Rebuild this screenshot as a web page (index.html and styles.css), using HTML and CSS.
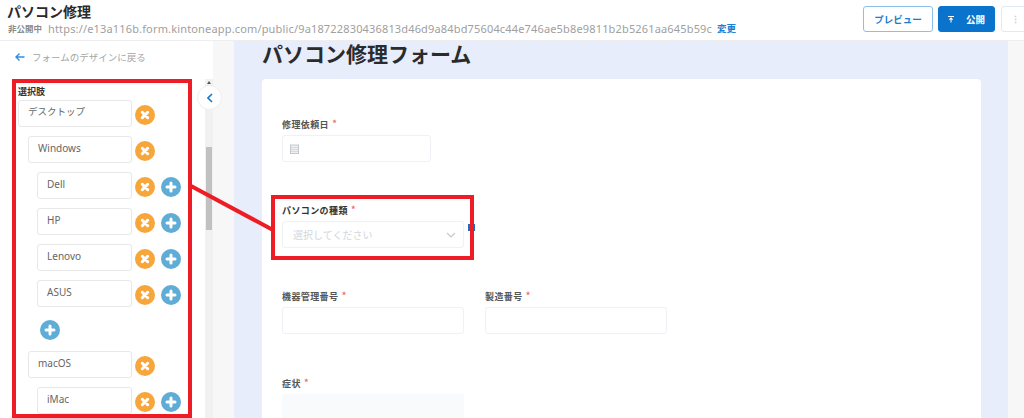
FILE: index.html
```html
<!DOCTYPE html>
<html lang="ja">
<head>
<meta charset="utf-8">
<title>パソコン修理</title>
<link rel="stylesheet" href="styles.css">
</head>
<body>
<div class="app">
  <header class="topbar">
    <div class="topinfo">
      <div class="apptitle">パソコン修理</div>
      <div class="urlrow">
        <span class="status">非公開中</span>
        <span class="url">https://e13a116b.form.kintoneapp.com/public/9a18722830436813d46d9a84bd75604c44e746ae5b8e9811b2b5261aa645b59c</span>
        <span class="change">変更</span>
      </div>
    </div>
    <div class="actions">
      <button class="btn preview">プレビュー</button>
      <button class="btn publish">
        <svg class="pubicon" width="6" height="7" viewBox="0 0 8 9"><path d="M0 0.5h8M4 8.5V3M1.8 4.8L4 2.6l2.2 2.2" fill="none" stroke="#fff" stroke-width="1.4"/></svg>
        公開
      </button>
      <button class="btn more">⋮</button>
    </div>
  </header>
  <div class="main">
    <aside class="side">
      <div class="sidecontent">
        <div class="back">
          <svg width="10" height="10" viewBox="0 0 10 10"><path d="M9.5 5H1M4.5 1.5L1 5l3.500 3.500" fill="none" stroke="#2e8fe0" stroke-width="1.400"/></svg>
          <span>フォームのデザインに戻る</span>
        </div>
        <div class="optlabel">選択肢</div>
        <div class="opt l0"><div class="optinput">デスクトップ</div><span class="round del"><svg viewBox="0 0 20 20"><use href="#x"/></svg></span></div>
        <div class="opt l1"><div class="optinput">Windows</div><span class="round del"><svg viewBox="0 0 20 20"><use href="#x"/></svg></span></div>
        <div class="opt l2"><div class="optinput">Dell</div><span class="round del"><svg viewBox="0 0 20 20"><use href="#x"/></svg></span><span class="round add"><svg viewBox="0 0 20 20"><use href="#p"/></svg></span></div>
        <div class="opt l2"><div class="optinput">HP</div><span class="round del"><svg viewBox="0 0 20 20"><use href="#x"/></svg></span><span class="round add"><svg viewBox="0 0 20 20"><use href="#p"/></svg></span></div>
        <div class="opt l2"><div class="optinput">Lenovo</div><span class="round del"><svg viewBox="0 0 20 20"><use href="#x"/></svg></span><span class="round add"><svg viewBox="0 0 20 20"><use href="#p"/></svg></span></div>
        <div class="opt l2"><div class="optinput">ASUS</div><span class="round del"><svg viewBox="0 0 20 20"><use href="#x"/></svg></span><span class="round add"><svg viewBox="0 0 20 20"><use href="#p"/></svg></span></div>
        <div class="addrow"><span class="round add"><svg viewBox="0 0 20 20"><use href="#p"/></svg></span></div>
        <div class="opt l1"><div class="optinput">macOS</div><span class="round del"><svg viewBox="0 0 20 20"><use href="#x"/></svg></span></div>
        <div class="opt l2"><div class="optinput">iMac</div><span class="round del"><svg viewBox="0 0 20 20"><use href="#x"/></svg></span><span class="round add"><svg viewBox="0 0 20 20"><use href="#p"/></svg></span></div>
      </div>
      <div class="scrollbar"><div class="sbup"></div><div class="sbthumb"></div></div>
    </aside>
    <div class="gutter">
      <span class="collapse"><svg width="6" height="10" viewBox="0 0 6 10"><path d="M5 1L1 5l4 4" fill="none" stroke="#1478d0" stroke-width="1.600"/></svg></span>
    </div>
    <main class="canvas">
      <h1 class="formtitle">パソコン修理フォーム</h1>
      <div class="card">
        <div class="field date">
          <label>修理依頼日<i>*</i></label>
          <div class="input narrow">
            <svg width="9" height="10" viewBox="0 0 9 10"><rect x="0.500" y="1" width="8" height="8.500" fill="#eef0f3" stroke="#c3c8cf"/><path d="M1 3.500h7M1 5.500h7M1 7.500h7" stroke="#ced2d8" stroke-width="0.800"/></svg>
          </div>
        </div>
        <div class="field kind">
          <label>パソコンの種類<i>*</i></label>
          <div class="input select">
            <span>選択してください</span>
            <svg width="10" height="6" viewBox="0 0 10 6"><path d="M1 1l4 4 4-4" fill="none" stroke="#c4cad2" stroke-width="1.200"/></svg>
          </div>
          <span class="handle"></span>
        </div>
        <div class="fieldrow">
          <div class="field"><label>機器管理番号<i>*</i></label><div class="input"></div></div>
          <div class="field"><label>製造番号<i>*</i></label><div class="input"></div></div>
        </div>
        <div class="field symptom">
          <label>症状<i>*</i></label>
          <div class="textarea"></div>
        </div>
      </div>
    </main>
    <div class="rightbar"></div>
  </div>
  <div class="redbox box1"></div>
  <div class="redbox box2"></div>
  <svg class="connector" width="1024" height="418" viewBox="0 0 1024 418"><line x1="191" y1="186" x2="273" y2="230" stroke="#ee1c25" stroke-width="4"/></svg>
</div>
<svg class="defs" width="0" height="0">
  <defs>
    <g id="x"><path d="M7.300 7.300l5.400 5.400M12.700 7.300l-5.400 5.400" stroke="#fff" stroke-width="3" stroke-linecap="round"/></g>
    <g id="p"><path d="M10 6v8M6 10h8" stroke="#fff" stroke-width="3" stroke-linecap="round"/></g>
  </defs>
</svg>
</body>
</html>
```
FILE: styles.css
```css
* { box-sizing: border-box; }
html, body { margin: 0; padding: 0; width: 1024px; height: 418px; overflow: hidden; background: #fff; }
body { font-family: "Noto Sans CJK JP", "Noto Sans", sans-serif; color: #333; }
.app { position: relative; width: 1024px; height: 418px; display: flex; flex-direction: column; overflow: hidden; }
.defs { position: absolute; }

.topbar { height: 41px; flex: none; display: flex; justify-content: space-between; border-bottom: 1px solid #eee; }
.topinfo { padding: 0 0 0 7px; }
.apptitle { font-size: 14px; line-height: 22px; font-weight: 700; color: #2a2a2a; height: 20px; }
.urlrow { display: flex; align-items: center; height: 16px; white-space: nowrap; }
.status { font-size: 8.500px; font-weight: 700; color: #8a8a8a; margin: 0 0 0 1px; width: 40px; }
.url { font-family: "Noto Sans", sans-serif; font-size: 11px; color: #a0a0a0; width: 669px; letter-spacing: 0.160px; }
.change { font-size: 9.500px; font-weight: 700; color: #1a80d0; }
.actions { display: flex; gap: 5px; padding-top: 6px; margin-right: -7px; }
.btn { height: 26px; border-radius: 3px; font-family: inherit; font-size: 9.500px; font-weight: 700; padding: 0; }
.preview { width: 70px; background: #fff; border: 1px solid #8cc0e8; color: #1a7ccc; }
.publish { width: 57px; margin-right: 1px; background: #0a74cc; border: 1px solid #0a74cc; color: #fff; display: flex; align-items: center; justify-content: center; gap: 12px; }
.pubicon { flex: none; }
.more { width: 30px; background: #fff; border: 1px solid #dfeaf6; color: #ccc; font-size: 9px; text-align: left; padding-left: 9px; }

.main { flex: 1; display: flex; min-height: 0; }
.side { width: 213px; flex: none; display: flex; background: #fff; overflow: hidden; }
.sidecontent { width: 205px; flex: none; padding: 0 0 0 18px; overflow: hidden; }
.back { display: flex; align-items: center; gap: 7px; height: 18px; margin: 7px 0 0 -3px; font-size: 9.500px; color: #a5a5a5; }
.optlabel { margin-top: 20px; font-size: 9px; line-height: 12px; font-weight: 700; color: #333; height: 12px; margin-bottom: 1px; }
.opt { display: flex; align-items: center; height: 28px; margin-bottom: 8px; }
.l0 { padding-left: 0; }
.l1 { padding-left: 10px; }
.l2 { padding-left: 19px; }
.optinput { flex: 0 0 auto; height: 27px; border: 1px solid #e8e8e8; border-radius: 3px; background: #fff; font-family: "Noto Sans", "Noto Sans CJK JP", sans-serif; font-size: 10px; line-height: 22px; padding-left: 9px; color: #666; }
.l0 .optinput { width: 114px; font-size: 9.500px; }
.l1 .optinput { width: 104px; }
.l2 .optinput { width: 95px; }
.round { width: 20px; height: 20px; border-radius: 50%; flex: none; display: block; margin-top: 3px; }
.round svg { display: block; width: 20px; height: 20px; }
.del { background: #f7a63c; margin-left: 3px; }
.add { background: #5facd6; margin-left: 6px; }
.addrow { height: 20px; margin: 13px 0 10px 16px; }
.addrow .add { margin: 0 0 0 6px; }

.scrollbar { width: 8px; flex: none; background: #f1f1f1; margin-top: 38px; position: relative; }
.sbup { width: 0; height: 0; margin: 2px auto 0; border: 2px solid transparent; border-bottom: 3px solid #555; border-top: 0; }
.sbthumb { width: 6px; height: 83px; margin: 63px auto 0; background: #c1c1c1; }

.gutter { width: 21px; flex: none; background: #f7f7f7; position: relative; }
.collapse { position: absolute; left: -16px; top: 44px; width: 25px; height: 25px; border-radius: 50%; background: #fff; border: 1px solid #eee; display: flex; align-items: center; justify-content: center; }

.canvas { flex: 1; background: #e8edfc; padding: 0 27px 0 28px; }
.formtitle { margin: 0; height: 38px; font-size: 21px; line-height: 25px; font-weight: 700; color: #2b2b2b; }
.card { background: #fff; border-radius: 4px; height: 400px; padding: 38px 20px 0; }
label { display: block; font-size: 9px; line-height: 13px; font-weight: 700; color: #555; letter-spacing: 0.400px; height: 13px; }
label i { font-style: normal; color: #f0625c; font-size: 11px; font-weight: 400; margin-left: 3px; }
.input { width: 182px; height: 27px; margin-top: 5px; border: 1px solid #eef1f6; border-radius: 3px; background: #fff; }
.narrow { width: 149px; display: flex; align-items: center; padding-left: 7px; }
.field { position: relative; }
.kind { margin-top: 41px; }
.kind label { color: #333; }
.select { display: flex; align-items: center; justify-content: space-between; padding: 0 7px 0 10px; font-size: 10px; color: #d3d6da; }
.handle { position: absolute; left: 186px; top: 21px; width: 7px; height: 7px; background: #1b6fc0; }
.fieldrow { display: flex; gap: 21px; margin-top: 41px; }
.symptom { margin-top: 42px; }
.textarea { width: 182px; height: 60px; margin-top: 5px; background: #f9fafc; border-radius: 3px; }

.rightbar { width: 16px; flex: none; background: #f7f7f7; }

.redbox { position: absolute; border: 4px solid #ee1c25; pointer-events: none; }
.box1 { left: 12px; top: 79px; width: 180px; height: 339px; }
.box2 { left: 271px; top: 195px; width: 203px; height: 65px; }
.connector { position: absolute; left: 0; top: 0; pointer-events: none; }
```
